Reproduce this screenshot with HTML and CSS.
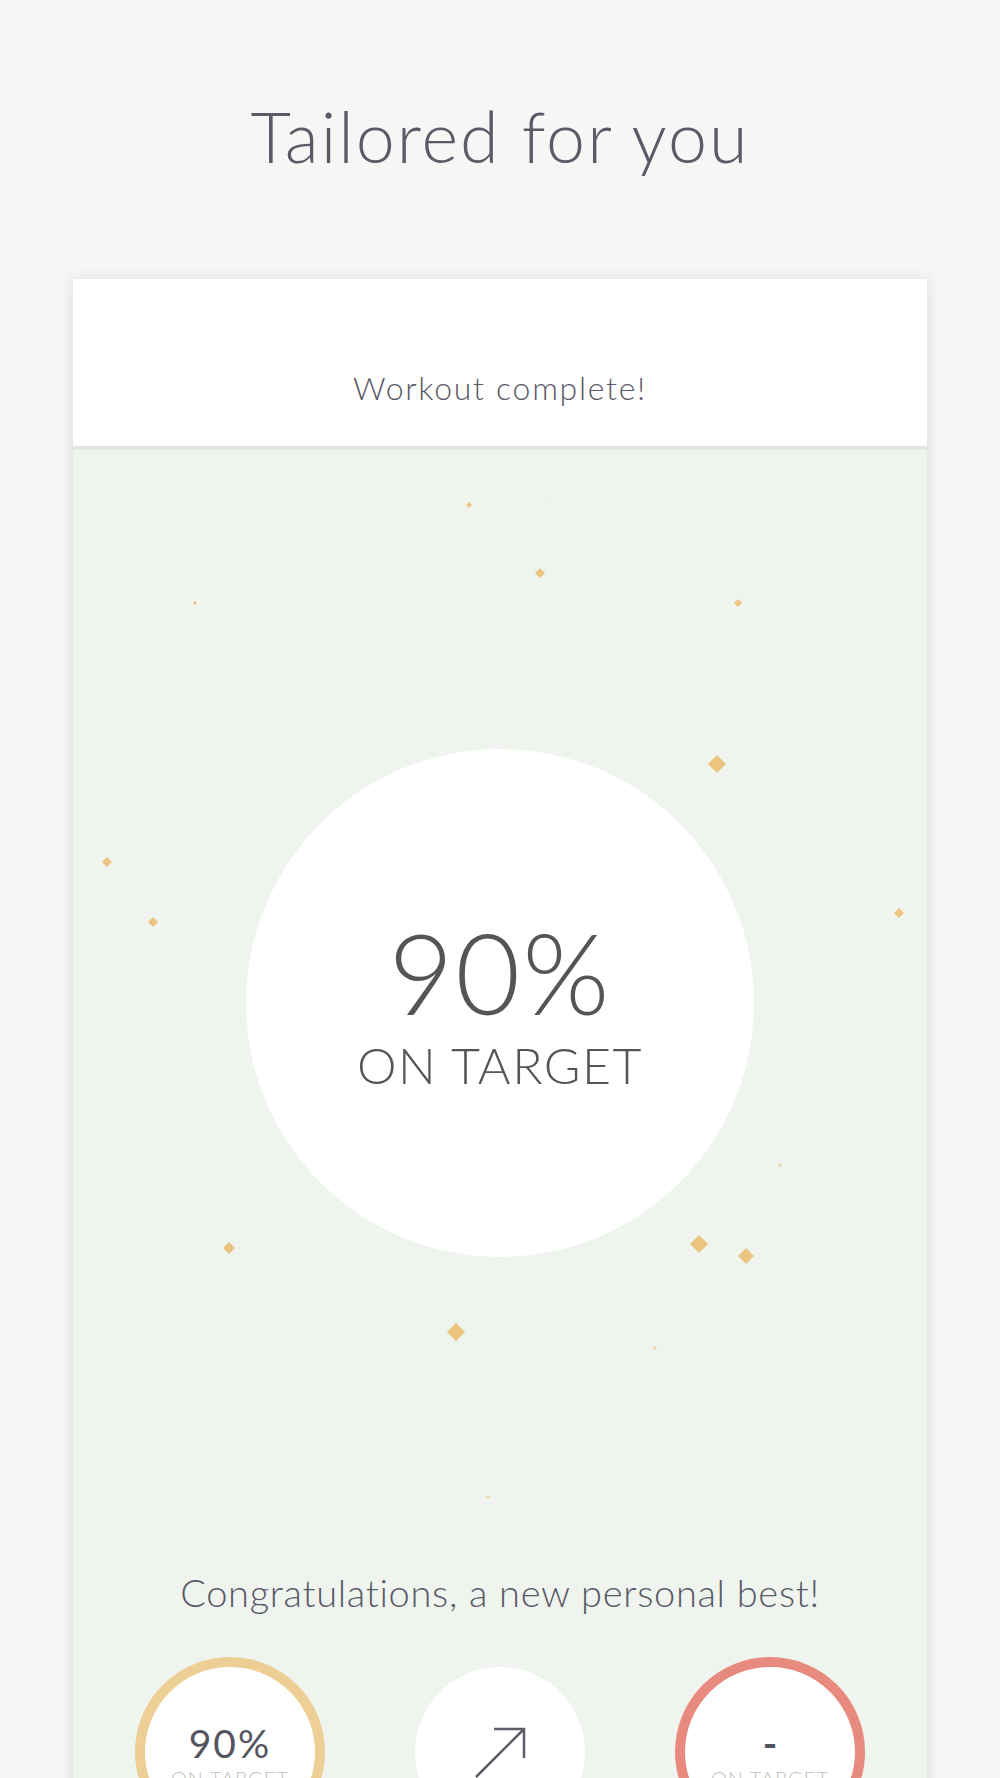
FILE: index.html
```html
<!DOCTYPE html>
<html lang="en">
<head>
    <meta charset="UTF-8">
    <meta name="viewport" content="width=device-width, initial-scale=1.0">
    <title>Tailored for you</title>
    <link rel="stylesheet" href="styles.css">
</head>
<body>
    <h1 class="title">Tailored for you</h1>

    <div class="card">
        <div class="card-header">Workout complete!</div>

        <div class="stage">
            <!-- confetti -->
            <svg class="confetti" width="854" height="1100" viewBox="0 0 854 1100">
                <g fill="#ebc47f">
                    <polygon points="396,52 399,55 396,58 393,55"/>
                    <polygon points="477,47 478,48 477,49 476,48" opacity="0.6"/>
                    <polygon points="467,118 472,123 467,128 462,123"/>
                    <polygon points="122,151 124,153 122,155 120,153"/>
                    <polygon points="665,149 669,153 665,157 661,153"/>
                    <polygon points="644,305 653,314 644,323 635,314"/>
                    <polygon points="191,346 192,347 191,348 190,347" opacity="0.5"/>
                    <polygon points="34,407 39,412 34,417 29,412"/>
                    <polygon points="80,467 85,472 80,477 75,472"/>
                    <polygon points="826,458 831,463 826,468 821,463"/>
                    <polygon points="707,713 709,715 707,717 705,715" opacity="0.7"/>
                    <polygon points="156,792 162,798 156,804 150,798"/>
                    <polygon points="626,785 635,794 626,803 617,794"/>
                    <polygon points="673,798 681,806 673,814 665,806"/>
                    <polygon points="383,873 392,882 383,891 374,882"/>
                    <polygon points="582,896 584,898 582,900 580,898" opacity="0.7"/>
                    <polygon points="415,1045 417,1047 415,1049 413,1047" opacity="0.7"/>
                </g>
            </svg>

            <div class="score-ring">
                <div class="score-value">90%</div>
                <div class="score-label">ON TARGET</div>
            </div>

            <p class="congrats">Congratulations, a new personal best!</p>

            <div class="summary">
                <div class="summary-item">
                    <div class="mini-ring ring-gold">
                        <div class="mini-value">90%</div>
                        <div class="mini-label">ON TARGET</div>
                    </div>
                </div>
                <div class="summary-item">
                    <div class="mini-ring ring-plain">
                        <svg class="trend" width="54" height="54" viewBox="0 0 54 54">
                            <path d="M3 51 L51 3 M21 3 H51 V32" fill="none" stroke="#5e5d6a" stroke-width="2.5"/>
                        </svg>
                    </div>
                </div>
                <div class="summary-item">
                    <div class="mini-ring ring-red">
                        <div class="mini-value dash">-</div>
                        <div class="mini-label">ON TARGET</div>
                    </div>
                </div>
            </div>
        </div>
    </div>
</body>
</html>
```

FILE: styles.css
```css
body {
    margin: 0;
    background-color: #f5f7f4;
    font-family: Lato, "Open Sans", sans-serif;
    color: #5a5967;
    overflow: hidden;
}

.title {
    margin: 0;
    padding-top: 101px;
    font-size: 70px;
    line-height: 70px;
    font-weight: 300;
    letter-spacing: 2px;
    text-align: center;
    color: #5b5a67;
}

.card {
    width: 854px;
    margin: 108px auto 0;
    background-color: white;
    box-shadow: 0 0 14px rgba(0, 0, 0, 0.11);
}

.card-header {
    padding: 93px 0 42px;
    font-size: 32px;
    line-height: 32px;
    font-weight: 300;
    letter-spacing: 1.7px;
    text-align: center;
    color: #5a5967;
    border-bottom: 4px solid #e2e6e2;
}

.stage {
    position: relative;
    background-color: #eff4ee;
    padding-top: 299px;
    padding-bottom: 80px;
}

.confetti {
    position: absolute;
    top: 0;
    left: 0;
}

.score-ring {
    position: relative;
    width: 508px;
    height: 508px;
    margin: 0 auto;
    border-radius: 50%;
    background-color: white;
    text-align: center;
    color: #555555;
}

.score-value {
    padding-top: 167px;
    font-size: 112px;
    line-height: 112px;
    font-weight: 300;
    letter-spacing: 2px;
}

.score-label {
    margin-top: 12px;
    font-size: 50px;
    line-height: 50px;
    font-weight: 300;
    letter-spacing: 1.5px;
}

.congrats {
    position: relative;
    margin: 316px 0 0;
    font-size: 38px;
    line-height: 38px;
    font-weight: 300;
    letter-spacing: 0.7px;
    text-align: center;
    color: #5a5967;
}

.summary {
    position: relative;
    display: grid;
    grid-template-columns: repeat(3, 1fr);
    align-items: center;
    padding: 0 22px;
    margin-top: 46px;
}

.summary-item {
    display: flex;
    justify-content: center;
}

.mini-ring {
    box-sizing: border-box;
    width: 190px;
    height: 190px;
    border-radius: 50%;
    background-color: white;
    border: 10px solid #edcf95;
    display: flex;
    flex-direction: column;
    align-items: center;
    padding-top: 57px;
}

.ring-red {
    border-color: #e88a7d;
}

.ring-plain {
    width: 170px;
    height: 170px;
    border: none;
    padding-top: 0;
    justify-content: center;
}

.mini-value {
    font-size: 39px;
    line-height: 38px;
    font-weight: 400;
    letter-spacing: 2px;
    color: #55545f;
}

.mini-value.dash {
    font-weight: 700;
    letter-spacing: 0;
}

.mini-label {
    margin-top: 6px;
    font-size: 20px;
    line-height: 20px;
    font-weight: 300;
    letter-spacing: 1px;
    color: #c2c2c2;
}

.trend {
    margin-top: 2px;
}
```
